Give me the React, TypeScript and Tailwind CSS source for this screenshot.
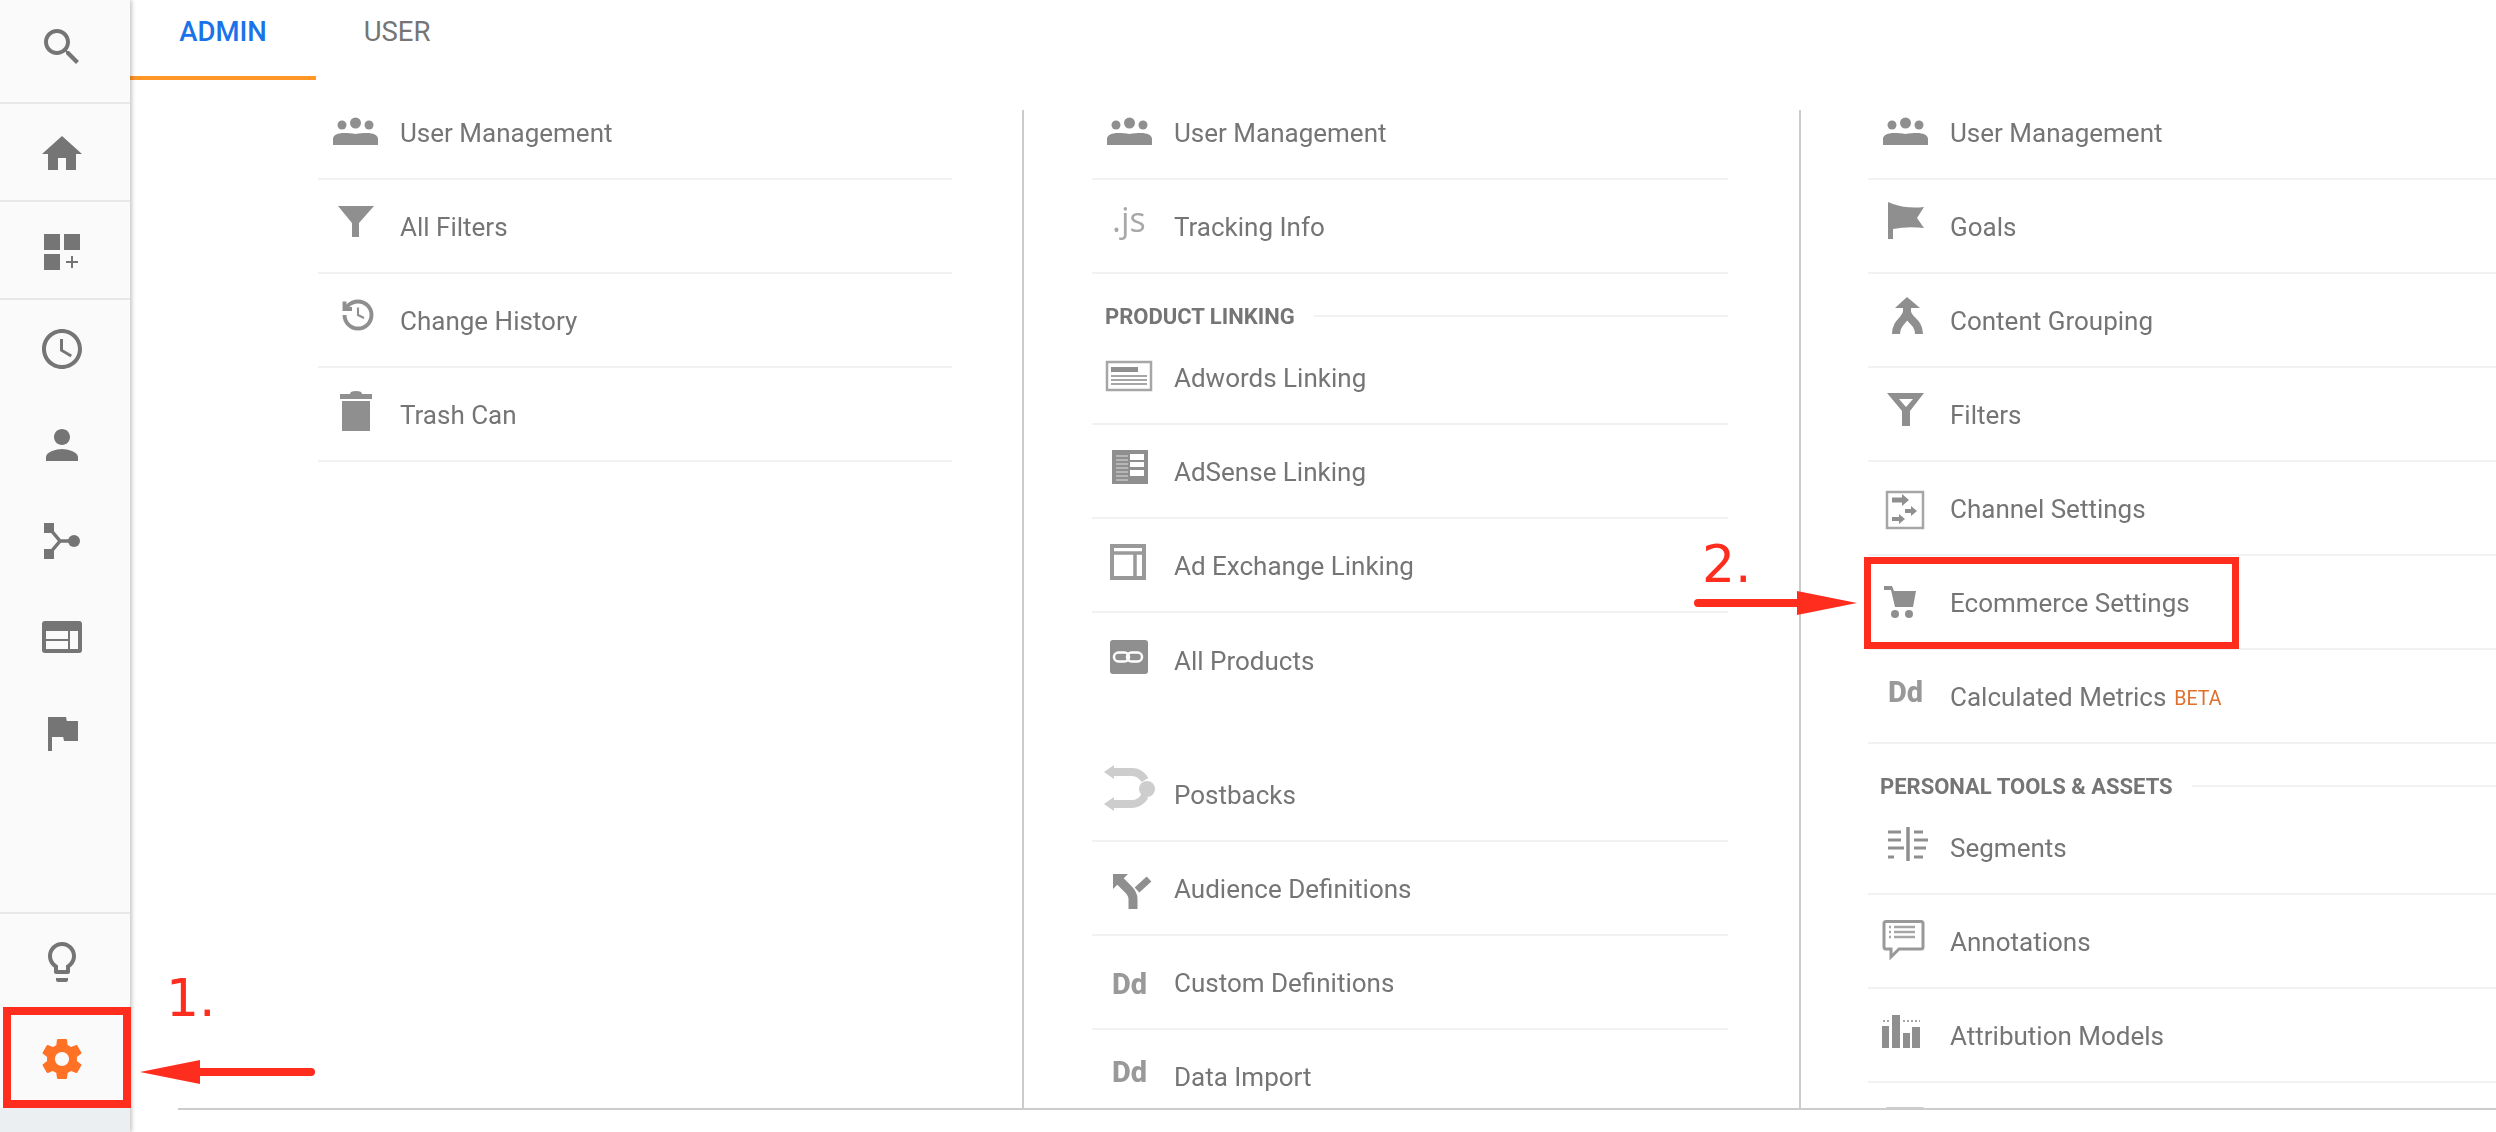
import type { ReactNode } from 'react';

const G = '#8f8f8f';
const L = '#a6a6a6';

// list icons are drawn in row coordinates: x from the row's left edge, y from 32px above its centre
function Ico({ children }: { children: ReactNode }) {
  return (
    <svg width="82" height="64" viewBox="0 0 82 64" className="block shrink-0 blur-[0.5px]">
      {children}
    </svg>
  );
}

function Side({ d, color = '#757575' }: { d: string; color?: string }) {
  return (
    <svg width="48" height="48" viewBox="0 0 24 24" fill={color} className="block">
      <path d={d} />
    </svg>
  );
}

const UsersIcon = (
  <Ico>
    <g fill={G}>
      <circle cx="24" cy="25" r="4.5" />
      <circle cx="37.5" cy="23" r="5.5" />
      <circle cx="51" cy="25" r="4.5" />
      <path d="M15 45v-6c0-4 5-6 11-6 4 0 8 0 11.500 1 3.500-1 7.500-1 11.500-1 6 0 11 2 11 6v6z" />
    </g>
  </Ico>
);

const DdIcon = ({ y }: { y: number }) => (
  <Ico>
    <text x="20" y={y} fontFamily="Roboto, sans-serif" fontWeight="800" fontSize="29" fill="#999">
      Dd
    </text>
  </Ico>
);

const icons = {
  filter: (
    <Ico>
      <path d="M20 12h36L41 29v14h-7V29z" fill={G} />
    </Ico>
  ),
  history: (
    <Ico>
      <g transform="translate(22 9) scale(1.5)" fill="none" stroke={G} strokeWidth="2.600">
        <path d="M3 12a9 9 0 1 0 9-9 9.750 9.750 0 0 0-6.740 2.740L3 8" />
        <path d="M3 3v5h5" />
        <path d="M12 7v5l4 2" strokeWidth="1.400" />
      </g>
    </Ico>
  ),
  trash: (
    <Ico>
      <g fill={G}>
        <path d="M32 12c0-2 2-3 6-3s6 1 6 3h10v5H22v-5z" />
        <rect x="24" y="19" width="28" height="30" />
      </g>
    </Ico>
  ),
  js: (
    <Ico>
      <text x="20" y="38" fontFamily="'Open Sans', sans-serif" fontWeight="400" fontSize="34" fill="#a8a8a8">
        .js
      </text>
    </Ico>
  ),
  adwords: (
    <Ico>
      <rect x="15" y="17" width="44" height="28" fill="none" stroke={L} strokeWidth="2.500" />
      <rect x="19" y="22" width="27" height="5" fill={G} />
      <path d="M19 31h36M19 35h36M19 39h36" stroke={L} strokeWidth="2" />
    </Ico>
  ),
  adsense: (
    <Ico>
      <rect x="20" y="11" width="36" height="34" fill={G} />
      <path d="M38 15h14v6H38zM38 23h14v5H38zM38 31h14v6H38z" fill="#fff" />
      <path d="M24 17h12M24 21h12M24 25h12M24 29h12M24 33h12M24 37h12M24 41h12" stroke="#c4c4c4" strokeWidth="1.500" />
    </Ico>
  ),
  adx: (
    <Ico>
      <rect x="20" y="13" width="32" height="32" fill="none" stroke="#999" strokeWidth="4" />
      <path d="M20 20h32M43 20v25" stroke="#999" strokeWidth="3.500" fill="none" />
    </Ico>
  ),
  products: (
    <Ico>
      <rect x="18" y="12" width="38" height="34" rx="3" fill={G} />
      <g fill="none" stroke="#fff" strokeWidth="2.500">
        <rect x="22" y="24.500" width="15" height="9" rx="4.500" />
        <rect x="35" y="24.500" width="15" height="9" rx="4.500" />
      </g>
    </Ico>
  ),
  postbacks: (
    <Ico>
      <g fill="#cdcdcd">
        <path d="M12 10l10-7v14zM12 42l10-7v14z" />
        <circle cx="55" cy="27" r="8" />
      </g>
      <path d="M20 10h20q8 0 13 8M20 42h20q8 0 13-8" fill="none" stroke="#cdcdcd" strokeWidth="8" />
    </Ico>
  ),
  audience: (
    <Ico>
      <path d="M21 18h15L21 33z" fill={G} />
      <path d="M27 24l9 9q5 5 5 10v10" fill="none" stroke={G} strokeWidth="9" />
      <path d="M45 34l12-11" fill="none" stroke={G} strokeWidth="7" />
    </Ico>
  ),
  goals: (
    <Ico>
      <path d="M20 8l5 2q14 5 31 3l-7 11 7 10q-16-2-31 1v10h-5z" fill={G} />
    </Ico>
  ),
  grouping: (
    <Ico>
      <path d="M39 9l13 11H27z" fill={G} />
      <path d="M39 17v6c0 9-11 10-11 23M39 17v6c0 9 12 10 12 23" fill="none" stroke={G} strokeWidth="8" />
    </Ico>
  ),
  filters: (
    <Ico>
      <path d="M19 11h37L42 29v15h-8V29zM31 17l7 8 7-8z" fill={G} fillRule="evenodd" />
    </Ico>
  ),
  channel: (
    <Ico>
      <rect x="19" y="16" width="36" height="36" fill="none" stroke={L} strokeWidth="2.500" />
      <g fill="#8f8f8f">
        <path d="M24 21.500h10V18l7 6-7 6v-3.500H24z" />
        <path d="M37 33h6V30l6 5-6 5v-3h-6z" />
        <path d="M24 41h7V38l6 5-6 5v-3h-7z" />
      </g>
    </Ico>
  ),
  cart: (
    <Ico>
      <path d="M16 16h8l2 5h22l-3 16H27l-4-17h-7z" fill={G} />
      <circle cx="27" cy="44" r="4" fill={G} />
      <circle cx="41" cy="44" r="4" fill={G} />
    </Ico>
  ),
  segments: (
    <Ico>
      <path d="M40 12v34" stroke={G} strokeWidth="3.500" />
      <path d="M20 17h13M20 25h13M20 33h16M20 42h6M46 17h9M46 25h14M46 33h12M46 42h9" stroke={G} strokeWidth="3" />
    </Ico>
  ),
  annotations: (
    <Ico>
      <path d="M18 12.500h35a2 2 0 0 1 2 2V38a2 2 0 0 1-2 2H31l-8 8v-8h-5a2 2 0 0 1-2-2V14.500a2 2 0 0 1 2-2z" fill="none" stroke="#999" strokeWidth="3" />
      <path d="M26 18h21M26 23h21M26 28h21M21 18h2M21 23h2M21 28h2" stroke={L} strokeWidth="2.500" />
    </Ico>
  ),
  attribution: (
    <Ico>
      <path d="M14 23h7v22h-7zM24 12h8v33h-8zM35 30h7v15h-7zM44 24h8v21h-8z" fill={G} />
      <path d="M15 18h6M35 18h17" stroke={L} strokeWidth="2" strokeDasharray="2 2" />
    </Ico>
  ),
  last: (
    <Ico>
      <rect x="17" y="9" width="40" height="30" rx="3" fill="#ccc" />
    </Ico>
  ),
};

function Row({ icon, label, extra, last }: { icon: ReactNode; label?: string; extra?: ReactNode; last?: boolean }) {
  return (
    <div className={`flex h-[94px] items-center ${last ? '' : 'border-b-2 border-[#f2f2f2]'}`}>
      {icon}
      <span className="pt-[3px] text-[26px] font-[450] text-[#757575] blur-[0.3px]">{label}</span>
      {extra}
    </div>
  );
}

function Heading({ title, x }: { title: string; x: string }) {
  return (
    <div className={`flex h-[57px] items-center gap-[19px] pt-[27px] ${x}`}>
      <span className="text-[22px] font-bold text-[#757575] blur-[0.3px]">{title}</span>
      <div className="h-[2px] flex-1 bg-[#f2f2f2]" />
    </div>
  );
}

export default function App() {
  return (
    <div className="relative flex h-screen w-full overflow-hidden bg-white font-['Roboto',sans-serif]">
      {/* Left rail */}
      <aside className="z-10 flex h-full w-[130px] shrink-0 flex-col bg-[#fafafa] pr-[6px] shadow-[2px_0_4px_rgba(0,0,0,0.22)]">
        <div className="-mr-[6px] flex h-[104px] items-center justify-center border-b-2 border-[#e8e8e8] pb-[9px] pr-[6px]">
          <Side d="M15.500 14h-.79l-.28-.27C15.410 12.590 16 11.110 16 9.500 16 5.910 13.090 3 9.500 3S3 5.910 3 9.500 5.910 16 9.500 16c1.610 0 3.090-.59 4.230-1.570l.27.28v.79l5 4.990L20.490 19l-4.990-5zm-6 0C7.010 14 5 11.990 5 9.500S7.010 5 9.500 5 14 7.010 14 9.500 11.990 14 9.500 14z" />
        </div>
        <div className="-mr-[6px] flex h-[98px] items-center justify-center border-b-2 border-[#e8e8e8] pr-[6px] pt-[4px]">
          <Side d="M10 20v-6h4v6h5v-8h3L12 3 2 12h3v8z" />
        </div>
        <div className="-mr-[6px] flex h-[98px] items-center justify-center border-b-2 border-[#e8e8e8] pr-[6px] pt-[4px]">
          <svg width="48" height="48" viewBox="0 0 48 48" fill="#757575" className="block">
            <path d="M6 6h16v16H6zM26 6h16v16H26zM6 26h16v16H6z" />
            <path d="M33 28h2v5h5v2h-5v5h-2v-5h-5v-2h5z" />
          </svg>
        </div>
        <div className="flex h-[96px] items-center justify-center pt-[2px]">
          <Side d="M11.990 2C6.470 2 2 6.480 2 12s4.470 10 9.990 10C17.520 22 22 17.520 22 12S17.520 2 11.990 2zM12 20c-4.420 0-8-3.580-8-8s3.580-8 8-8 8 3.580 8 8-3.580 8-8 8zM12.500 7H11v6l5.250 3.150.75-1.230-4.500-2.670z" />
        </div>
        <div className="flex h-[96px] items-center justify-center pt-[2px]">
          <Side d="M12 12c2.210 0 4-1.790 4-4s-1.790-4-4-4-4 1.790-4 4 1.790 4 4 4zm0 2c-2.670 0-8 1.340-8 4v2h16v-2c0-2.660-5.330-4-8-4z" />
        </div>
        <div className="flex h-[96px] items-center justify-center pt-[2px]">
          <svg width="48" height="48" viewBox="0 0 48 48" className="block">
            <path d="M12 12l10 12-10 12M22 24h14" fill="none" stroke="#757575" strokeWidth="3.500" />
            <path d="M6 6h10v10H6zM6 32h10v10H6z" fill="#757575" />
            <circle cx="36" cy="24" r="6" fill="#757575" />
          </svg>
        </div>
        <div className="flex h-[96px] items-center justify-center pt-[2px]">
          <svg width="48" height="48" viewBox="0 0 48 48" className="block">
            <rect x="4" y="8" width="40" height="32" rx="3" fill="#757575" />
            <path d="M8 18h22v8H8zM8 28h22v8H8zM32 18h8v18h-8z" fill="#fafafa" />
          </svg>
        </div>
        <div className="flex h-[96px] items-center justify-center pt-[2px]">
          <Side d="M14.400 6L14 4H5v17h2v-7h5.600l.4 2h7V6z" />
        </div>
        <div className="-mr-[6px] mt-auto flex h-[98px] items-center justify-center border-t-2 border-[#e8e8e8] pr-[6px]">
          <Side d="M9 21c0 .55.45 1 1 1h4c.55 0 1-.45 1-1v-1H9v1zm3-19C8.140 2 5 5.140 5 9c0 2.380 1.190 4.470 3 5.740V17c0 .55.45 1 1 1h6c.55 0 1-.45 1-1v-2.260c1.810-1.270 3-3.360 3-5.740 0-3.860-3.140-7-7-7zm2.850 11.100l-.85.6V16h-4v-2.300l-.85-.6C7.800 12.160 7 10.630 7 9c0-2.760 2.240-5 5-5s5 2.240 5 5c0 1.630-.8 3.160-2.150 4.100z" />
        </div>
        <div className="flex h-[98px] items-center justify-center">
          <Side
            color="#ff7226"
            d="M19.430 12.980c.04-.32.07-.64.07-.98s-.03-.66-.07-.98l2.110-1.650c.19-.15.24-.42.12-.64l-2-3.460c-.12-.22-.39-.3-.61-.22l-2.490 1c-.52-.4-1.080-.73-1.690-.98l-.38-2.650C14.460 2.180 14.250 2 14 2h-4c-.25 0-.46.18-.49.42l-.38 2.650c-.61.25-1.170.59-1.690.98l-2.490-1c-.23-.09-.49 0-.61.22l-2 3.460c-.13.22-.07.49.12.64l2.110 1.650c-.04.32-.07.65-.07.98s.03.66.07.98l-2.110 1.650c-.19.15-.24.42-.12.64l2 3.460c.12.22.39.3.61.22l2.490-1c.52.4 1.080.73 1.690.98l.38 2.650c.03.24.24.42.49.42h4c.25 0 .46-.18.49-.42l.38-2.650c.61-.25 1.170-.59 1.690-.98l2.490 1c.23.09.49 0 .61-.22l2-3.460c.12-.22.07-.49-.12-.64l-2.110-1.650zM12 15.500c-1.930 0-3.500-1.570-3.500-3.500s1.570-3.500 3.500-3.500 3.500 1.570 3.500 3.500-1.570 3.500-3.500 3.500z"
          />
        </div>
        <div className="-mr-[6px] h-[24px] bg-[#eceff1]" />
      </aside>

      {/* Main */}
      <main className="flex min-w-0 flex-1 flex-col">
        {/* Tabs */}
        <div className="flex h-[80px] shrink-0">
          <div className="flex w-[186px] justify-center border-b-4 border-[#ff9626] pt-[15px] text-[27.5px] font-medium leading-[34px] text-[#1a73e8]">
            ADMIN
          </div>
          <div className="flex w-[162px] justify-center pt-[15px] text-[27.5px] font-[450] leading-[34px] text-[#757575]">
            USER
          </div>
        </div>

        {/* Columns */}
        <div className="flex h-[1028px] shrink-0 overflow-hidden pt-[30px]">
          <div className="w-[892px] shrink-0 pl-[188px] pr-[70px]">
            <div className="-mt-[24px]">
              <Row icon={UsersIcon} label="User Management" />
              <Row icon={icons.filter} label="All Filters" />
              <Row icon={icons.history} label="Change History" />
              <Row icon={icons.trash} label="Trash Can" />
            </div>
          </div>

          <div className="w-[777px] shrink-0 border-l-2 border-[#ccc] pl-[68px] pr-[71px]">
            <div className="-mt-[24px]">
              <Row icon={UsersIcon} label="User Management" />
              <Row icon={icons.js} label="Tracking Info" />
              <Heading title="PRODUCT LINKING" x="pl-[13px]" />
              <Row icon={icons.adwords} label="Adwords Linking" />
              <Row icon={icons.adsense} label="AdSense Linking" />
              <Row icon={icons.adx} label="Ad Exchange Linking" />
              <Row icon={icons.products} label="All Products" last />
              <div className="h-[41px]" />
              <Row icon={icons.postbacks} label="Postbacks" />
              <Row icon={icons.audience} label="Audience Definitions" />
              <Row icon={<DdIcon y={44} />} label="Custom Definitions" />
              <Row icon={<DdIcon y={38} />} label="Data Import" />
            </div>
          </div>

          <div className="min-w-0 flex-1 border-l-2 border-[#ccc] pl-[67px]">
            <div className="-mt-[24px]">
              <Row icon={UsersIcon} label="User Management" />
              <Row icon={icons.goals} label="Goals" />
              <Row icon={icons.grouping} label="Content Grouping" />
              <Row icon={icons.filters} label="Filters" />
              <Row icon={icons.channel} label="Channel Settings" />
              <Row icon={icons.cart} label="Ecommerce Settings" />
              <Row
                icon={<DdIcon y={38} />}
                label="Calculated Metrics"
                extra={<span className="ml-[8px] mt-[5px] text-[19.5px] text-[#e0702c] blur-[0.3px]">BETA</span>}
              />
              <Heading title="PERSONAL TOOLS & ASSETS" x="pl-[12px]" />
              <Row icon={icons.segments} label="Segments" />
              <Row icon={icons.annotations} label="Annotations" />
              <Row icon={icons.attribution} label="Attribution Models" />
              <Row icon={icons.last} last />
            </div>
          </div>
        </div>

        <div className="ml-[48px] h-[2px] shrink-0 bg-[#ccc]" />
      </main>

      {/* Red callouts */}
      <div className="absolute left-[3px] top-[1007px] z-20 h-[101px] w-[128px] border-[8px] border-[#ff2d1e]" />
      <svg width="180" height="24" viewBox="0 0 180 24" className="absolute left-[139px] top-[1060px] z-20">
        <path d="M1 12L61 0v24z" fill="#ff2d1e" />
        <path d="M60 12h112" stroke="#ff2d1e" strokeWidth="8" strokeLinecap="round" />
      </svg>
      <span className="absolute left-[166px] top-[968px] z-20 font-['DejaVu_Sans',sans-serif] text-[52px] leading-[60px] text-[#ff2d1e]">
        1.
      </span>

      <div className="absolute left-[1864px] top-[557px] z-20 h-[92px] w-[375px] border-[7px] border-[#ff2d1e]" />
      <svg width="170" height="24" viewBox="0 0 170 24" className="absolute left-[1690px] top-[591px] z-20">
        <path d="M167 12L107 0v24z" fill="#ff2d1e" />
        <path d="M108 12H8" stroke="#ff2d1e" strokeWidth="8" strokeLinecap="round" />
      </svg>
      <span className="absolute left-[1702px] top-[534px] z-20 font-['DejaVu_Sans',sans-serif] text-[52px] leading-[60px] text-[#ff2d1e]">
        2.
      </span>
    </div>
  );
}
